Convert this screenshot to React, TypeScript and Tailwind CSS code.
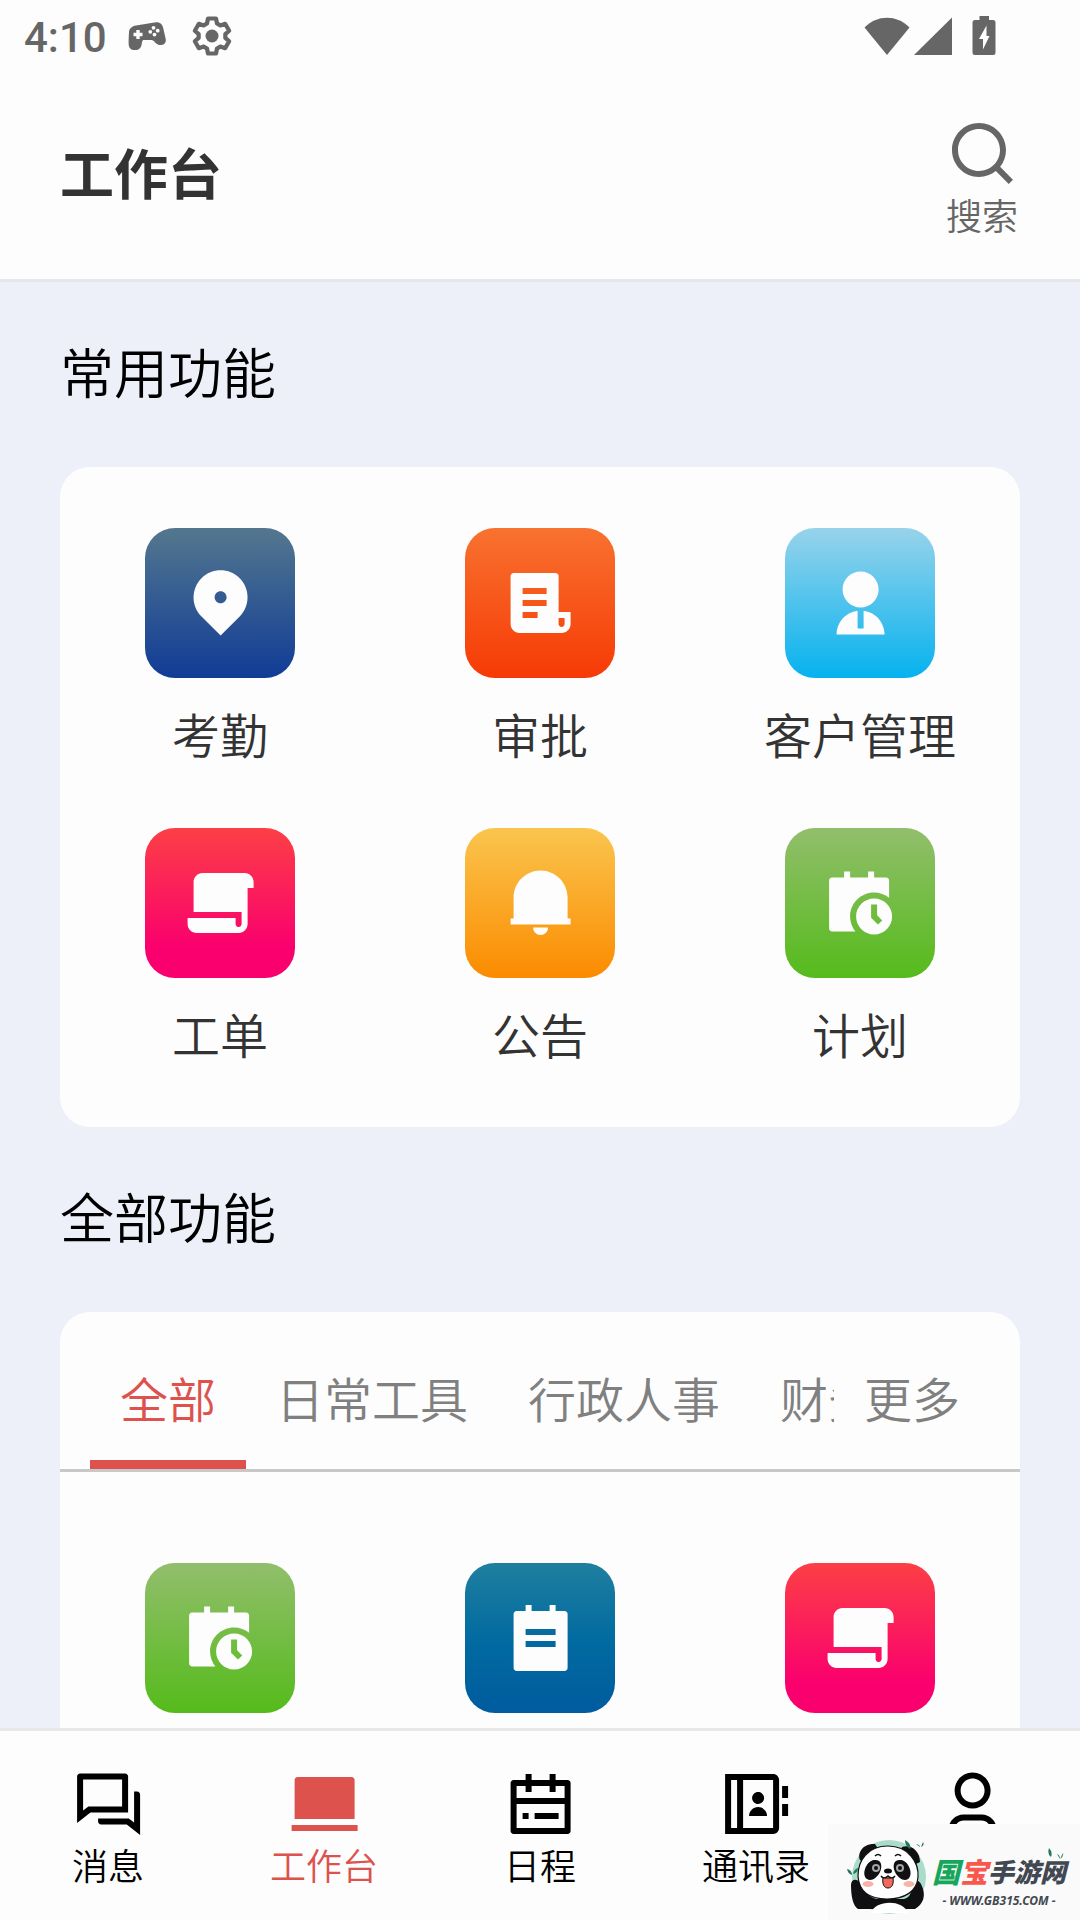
import type { ReactNode } from 'react';
import type { IconType } from 'react-icons';
import {
    RiCalendarScheduleFill,
    RiCalendarTodoLine,
    RiContactsBookLine,
    RiFileList3Fill,
    RiFilePaper2Fill,
    RiMacbookFill,
    RiMapPin2Fill,
    RiNotification2Fill,
    RiQuestionAnswerLine,
    RiSearchLine,
    RiTodoFill,
    RiUser2Fill,
    RiUser3Line,
} from 'react-icons/ri';

type Feature = {
    label: string;
    icon: IconType;
    // shifted so that the glyph itself is centred, not its 24px box
    viewBox: string;
    color: string;
};

const plan: Feature = { label: '计划', icon: RiCalendarScheduleFill, viewBox: '0.3 -0.5 24 24', color: 'from-[#92be6c] to-[#55bb1b]' };
const order: Feature = { label: '工单', icon: RiFilePaper2Fill, viewBox: '-0.2 0 24 24', color: 'from-[#fc3f45] to-[#fa006e] to-80%' };

const commonFeatures: Feature[] = [
    { label: '考勤', icon: RiMapPin2Fill, viewBox: '-0.2 0.9 24 24', color: 'from-[#54778e] to-[#103c96]' },
    { label: '审批', icon: RiFileList3Fill, viewBox: '-0.2 0 24 24', color: 'from-[#f87230] to-[#f63a05]' },
    { label: '客户管理', icon: RiUser2Fill, viewBox: '-0.2 -0.5 24 24', color: 'from-[#98d3ea] to-[#05b2ef]' },
    order,
    { label: '公告', icon: RiNotification2Fill, viewBox: '-0.2 0.8 24 24', color: 'from-[#fac54e] to-[#fb8b00]' },
    plan,
];

const allFeatures: Feature[] = [
    plan,
    { label: '日报', icon: RiTodoFill, viewBox: '-0.2 -1 24 24', color: 'from-[#1f7f9f] via-[#026ba0] to-[#005b9f]' },
    order,
];

const tabs = ['全部', '日常工具', '行政人事', '财务'];

const navItems = [
    { label: '消息', icon: RiQuestionAnswerLine, viewBox: '-0.7 0.2 24 24' },
    { label: '工作台', icon: RiMacbookFill, viewBox: '-0.2 0 24 24', active: true },
    { label: '日程', icon: RiCalendarTodoLine, viewBox: '-0.2 -1 24 24' },
    { label: '通讯录', icon: RiContactsBookLine, viewBox: '1.3 0 24 24' },
    { label: '我的', icon: RiUser3Line, viewBox: '-0.2 -0.5 24 24', iconOnly: true },
];

function gearPoints() {
    const tooth = [[-5, -12.5], [-4, -17.5], [4, -17.5], [5, -12.5]];
    const points: string[] = [];
    for (let i = 0; i < 6; i++) {
        const a = (i * Math.PI) / 3;
        for (const [x, y] of tooth) {
            points.push(`${(x * Math.cos(a) - y * Math.sin(a)).toFixed(2)},${(x * Math.sin(a) + y * Math.cos(a)).toFixed(2)}`);
        }
    }
    return points.join(' ');
}

function StatusBar() {
    return (
        <div className="flex h-[72px] items-center justify-between pl-6 pr-[84px] text-[#666]">
            <div className="flex items-center">
                <span className="pt-[3px] font-[Roboto,sans-serif] text-[42px] font-medium leading-none">4:10</span>
                <svg className="ml-[21px] h-[28px] w-[38px]" viewBox="0 0 38 28" aria-hidden="true">
                    <path
                        fill="currentColor"
                        d="M8 3.5 28 .3C32 0 34.5 2.500 35.200 6L37.700 17c.8 4.500-3 6.500-6.200 6-3.500-.6-5-4-7.500-5H15c-1.500 1.500-.8 4.500-2.300 7.200C10.500 29 4.500 29 2 26.200.2 24 .6 20 .7 16L1 10C1.200 6.500 4 4.100 8 3.500z"
                    />
                    <path d="M10 8v9M5.500 12.500h9" stroke="#fdfdfd" strokeWidth="3.400" />
                    <g fill="#fdfdfd">
                        <circle cx="25.500" cy="5.800" r="1.900" />
                        <circle cx="22.300" cy="9.800" r="1.900" />
                        <circle cx="29.700" cy="8.700" r="1.900" />
                        <circle cx="26.500" cy="12.600" r="1.900" />
                    </g>
                </svg>
                <svg className="ml-[26px] h-[40px] w-[40px]" viewBox="-20 -20 40 40" aria-hidden="true">
                    <polygon points={gearPoints()} fill="none" stroke="currentColor" strokeWidth="4.200" strokeLinejoin="round" />
                    <circle r="6.500" fill="currentColor" />
                </svg>
            </div>
            <div className="flex items-center">
                <svg className="h-[40px] w-[46px]" viewBox="0 0 46 40" fill="currentColor" aria-hidden="true">
                    <path d="M.5 11.500C7 5 14.500 1.700 23 1.700S39 5 45.500 11.500L23 39z" />
                </svg>
                <svg className="ml-1 h-[40px] w-[38px]" viewBox="0 0 38 40" fill="currentColor" aria-hidden="true">
                    <path d="M38 1.500V39H0z" />
                </svg>
                <svg className="ml-5 h-[40px] w-[24px]" viewBox="0 0 24 40" fill="currentColor" aria-hidden="true">
                    <path
                        fillRule="evenodd"
                        d="M7.500 0h9.500v4H21a2.500 2.500 0 0 1 2.500 2.500V36.500A2.500 2.500 0 0 1 21 39H3a2.500 2.500 0 0 1-2.500-2.500V6.500A2.500 2.500 0 0 1 3 4h4.500zM14.500 9.500 7 23h4v10.500L17.500 20h-3z"
                    />
                </svg>
            </div>
        </div>
    );
}

function Header() {
    return (
        <header className="border-b-[3px] border-[#e5e7ea] bg-[#fdfdfd]">
            <StatusBar />
            <div className="flex items-start justify-between pb-10 pl-[60px] pr-[62px] pt-[45px]">
                <h1 className="text-[54px] font-bold leading-[110px] text-[#333]">工作台</h1>
                <button type="button" className="flex flex-col items-center text-[#666]">
                    <RiSearchLine className="size-[72px]" />
                    <span className="text-4xl leading-[50px] font-[350]">搜索</span>
                </button>
            </div>
        </header>
    );
}

function SectionTitle({ children }: { children: ReactNode }) {
    return <h2 className="pb-14 pt-[49px] text-[54px] leading-[80px] font-[350] text-black">{children}</h2>;
}

function FeatureGrid({ items, iconOnly }: { items: Feature[]; iconOnly?: boolean }) {
    return (
        <div className="grid grid-cols-3 gap-y-[60px]">
            {items.map(({ label, icon: Icon, viewBox, color }) => (
                <button key={label} type="button" aria-label={label} className="flex flex-col items-center">
                    <span className={`flex size-[150px] items-center justify-center rounded-[30px] bg-linear-to-b/srgb text-[#fdfdfd] ${color}`}>
                        <Icon className="size-[72px]" viewBox={viewBox} />
                    </span>
                    {!iconOnly && <span className="mt-5 text-5xl leading-[70px] font-[350] text-[#333]">{label}</span>}
                </button>
            ))}
        </div>
    );
}

function FeatureTabs() {
    return (
        <div className="flex border-b-[3px] border-[#c8c8c8] px-[30px] text-5xl leading-[70px] font-[350] text-[#808080]">
            <div className="flex min-w-0 flex-1 overflow-hidden" role="tablist">
                {tabs.map((tab, i) => (
                    <button
                        key={tab}
                        type="button"
                        role="tab"
                        aria-selected={i === 0}
                        className={`shrink-0 whitespace-nowrap border-b-[9px] px-[30px] pb-7 pt-[50px] ${
                            i === 0 ? 'border-[#dd524d] text-[#dd524d]' : 'border-transparent'
                        }`}
                    >
                        {tab}
                    </button>
                ))}
            </div>
            <button type="button" className="shrink-0 border-b-[9px] border-transparent px-[30px] pb-7 pt-[50px]">
                更多
            </button>
        </div>
    );
}

function BottomNav() {
    return (
        <nav className="grid grid-cols-5 border-t-[3px] border-[#e8e8e8] bg-[#fdfdfd] pb-[31px] pt-[37px]">
            {navItems.map(({ label, icon: Icon, viewBox, active, iconOnly }) => (
                <a key={label} href="#" aria-label={label} className={`flex flex-col items-center ${active ? 'text-[#dd524d]' : 'text-black'}`}>
                    <Icon className="size-[72px]" viewBox={viewBox} />
                    {!iconOnly && <span className="text-4xl leading-[49px] font-[350]">{label}</span>}
                </a>
            ))}
        </nav>
    );
}

function Panda() {
    return (
        <svg className="h-[76px] w-[84px]" viewBox="0 0 84 76" aria-hidden="true">
            <circle cx="43" cy="39" r="37" fill="#a9dcc9" />
            <path d="M14 22c-3-8 4-17 15-16l4 6-14 14zM56 9c8-3 18 3 18 15l-6 3-14-12z" fill="#101012" />
            <path d="M5 47c0-6 6-7 9-2 4 9 10 14 16 16h28c6-2 8-6 6-12 0-7 8-9 11-3 6 12 2 20-6 25H12C7 68 5 58 5 47z" fill="#101012" />
            <path d="M25 75c4-13 32-14 37 0z" fill="#fff" />
            <path d="M42 8c21 0 31 17 30 31-1 15-14 22-31 22S13 54 12 38C12 22 22 8 42 8z" fill="#fff" stroke="#101012" strokeWidth="1.200" />
            <path d="M28 22c7-1 9 5 6 12-3 6-9 10-13 7-6-4-1-18 7-19zM55 22c-7-1-9 5-6 12 3 6 9 10 13 7 6-4 1-18-7-19z" fill="#101012" />
            <circle cx="30" cy="30" r="4" fill="#a5a5a7" />
            <circle cx="54" cy="30" r="4" fill="#a5a5a7" />
            <circle cx="30" cy="30" r="2" fill="#101012" />
            <circle cx="54" cy="30" r="2" fill="#101012" />
            <path d="M29 18q3-3 6 0M49 18q3-3 6 0" fill="none" stroke="#101012" strokeWidth="1.600" />
            <ellipse cx="42" cy="33" rx="4" ry="2.500" fill="#101012" />
            <path d="M35 38q3 4 7 0 4 4 7 0" fill="none" stroke="#101012" strokeWidth="1.500" />
            <path d="M37 40h10c1 6-1 10-5 10s-6-4-5-10z" fill="#ef6a5c" stroke="#101012" />
            <ellipse cx="22" cy="46" rx="5.500" ry="3" fill="#f9b2a6" />
            <ellipse cx="63" cy="46" rx="5.500" ry="3" fill="#f9b2a6" />
            <path d="M59 2q7 4 5 9-5-3-5-9zM1 31q5 1 5 6-4-1-5-6zM7 36q1-5 5-6 0 5-5 6zM70 6q4 1 4 3M77 4q2 3-2 5" fill="#23795c" />
        </svg>
    );
}

function SiteBadge() {
    return (
        <div className="absolute bottom-0 right-0 flex h-24 w-[252px] items-start bg-[#fafafa] pl-[18px] pt-[14px]">
            <Panda />
            <div className="flex flex-col items-center pl-[2px] pt-[13px] font-bold italic text-[#424852]">
                <div className="flex items-center whitespace-nowrap leading-[40px]">
                    <span className="text-[28px] font-black text-[#16a75c]">国</span>
                    <span className="text-[28px] font-black text-[#f9574e]">宝</span>
                    <span className="text-[26px] font-black">手游网</span>
                </div>
                <span className="font-['Noto_Sans',sans-serif] text-xs leading-[20px]">- WWW.GB315.COM -</span>
            </div>
            <svg className="absolute right-4 top-6 h-3 w-4" viewBox="0 0 16 12" aria-hidden="true">
                <path d="M1 0q4 4 2 9-4-3-2-9zM9 6q3 1 3 5M15 5q1 3-3 6" fill="#23795c" />
            </svg>
        </div>
    );
}

export default function App() {
    return (
        <div className="relative flex h-screen flex-col overflow-hidden bg-[#edf0f9] font-['Noto_Sans_CJK_SC',sans-serif]">
            <Header />
            <main className="min-h-0 flex-1 overflow-hidden px-[60px]">
                <SectionTitle>常用功能</SectionTitle>
                <section className="rounded-[30px] bg-[#fdfdfd] pb-[59px] pt-[61px]">
                    <FeatureGrid items={commonFeatures} />
                </section>
                <SectionTitle>全部功能</SectionTitle>
                <section className="rounded-[30px] bg-[#fdfdfd] pb-[59px]">
                    <FeatureTabs />
                    <div className="pt-[91px]">
                        <FeatureGrid items={allFeatures} iconOnly />
                    </div>
                </section>
            </main>
            <BottomNav />
            <SiteBadge />
        </div>
    );
}
